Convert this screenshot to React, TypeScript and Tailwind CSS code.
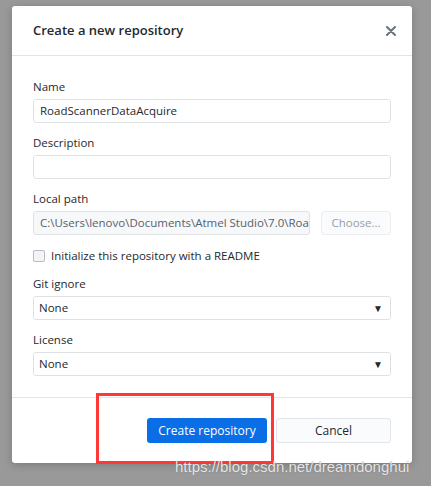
import { ReactNode } from "react";

const font = { fontFamily: '"Open Sans", "Noto Sans", "Liberation Sans", sans-serif' };

const Field = ({ label, children, className = "" }: { label: string; children: ReactNode; className?: string }) => (
  <div className={`flex flex-col ${className}`}>
    <label className="h-4 text-[11.5px] leading-4 text-[#24292e]">{label}</label>
    <div className="mt-1">{children}</div>
  </div>
);

const Select = ({ value }: { value: string }) => (
  <div className="flex h-6 w-full items-center justify-between rounded-[3px] border border-[#dfe2e5] bg-white pl-[5px] pr-[7px] text-[11.5px] text-[#24292e]">
    <span>{value}</span>
    <span className="text-[10px] text-[#24292e]">▼</span>
  </div>
);

export default function App() {
  return (
    <div className="relative h-[486px] w-full overflow-hidden bg-[#999999]" style={font}>
      <div className="ml-3 pt-[6px]">
        <div className="w-[400px] rounded-[3px] bg-white shadow-[0_2px_8px_rgba(0,0,0,0.2)]">
          <div className="flex h-[50px] items-center justify-between border-b border-[#e1e4e8] pl-[21px] pr-[15px]">
            <h1 className="pt-[1px] text-[13px] font-semibold text-[#24292e]">Create a new repository</h1>
            <svg width="10" height="10" viewBox="0 0 10 10" className="mr-[1px]">
              <path d="M1 1L9 9M9 1L1 9" stroke="#6a737d" strokeWidth="2" strokeLinecap="round" />
            </svg>
          </div>

          <div className="flex flex-col px-[21px] pb-[21px] pt-[23px]">
            <Field label="Name">
              <div className="flex h-6 items-center rounded-[3px] border border-[#dfe2e5] px-[6px] text-[11.5px] text-[#24292e]">
                RoadScannerDataAcquire
              </div>
            </Field>

            <Field label="Description" className="mt-3">
              <div className="h-6 rounded-[3px] border border-[#dfe2e5]" />
            </Field>

            <Field label="Local path" className="mt-3">
              <div className="flex gap-[11px]">
                <div className="flex h-6 flex-1 items-center overflow-hidden whitespace-nowrap rounded-[3px] border border-[#dfe2e5] bg-[#f6f8fa] px-[6px] text-[11.5px] text-[#586069]">
                  C:\Users\lenovo\Documents\Atmel Studio\7.0\Roa
                </div>
                <div className="flex h-6 w-[70px] items-center justify-center rounded-[3px] border border-[#eaecef] bg-[#fafbfc] text-[11.5px] text-[#959da5]">
                  Choose...
                </div>
              </div>
            </Field>

            <div className="mt-[13px] flex h-4 items-center gap-[6px] text-[11.5px] text-[#24292e]">
              <span className="h-[12px] w-[12px] rounded-[2px] border border-[#b7bcc2] bg-[#f3f4f6]" />
              <span>Initialize this repository with a README</span>
            </div>

            <Field label="Git ignore" className="mt-3">
              <Select value="None" />
            </Field>

            <Field label="License" className="mt-3">
              <Select value="None" />
            </Field>
          </div>

          <div className="flex justify-end gap-[9px] border-t border-[#e1e4e8] px-[21px] pb-[20px] pt-[20px]">
            <button className="h-[25px] w-[120px] rounded-[3px] bg-[#0a6ee6] text-[12px] text-white">Create repository</button>
            <button className="h-[25px] w-[115px] rounded-[3px] border border-[#e1e4e8] bg-[#fafbfc] text-[12px] text-[#24292e]">Cancel</button>
          </div>
        </div>
      </div>

      <div className="absolute left-[96px] top-[393px] h-[71px] w-[178px] border-[3px] border-[#ff3737]" />

      <div
        className="absolute left-[175px] top-[457px] text-[15px] leading-5 text-[#e6e6e6] [text-shadow:0_0_1px_rgba(0,0,0,0.3)]"
        style={{ fontFamily: '"Liberation Sans", Arial, sans-serif' }}
      >
        https://blog.csdn.net/dreamdonghui
      </div>
    </div>
  );
}
